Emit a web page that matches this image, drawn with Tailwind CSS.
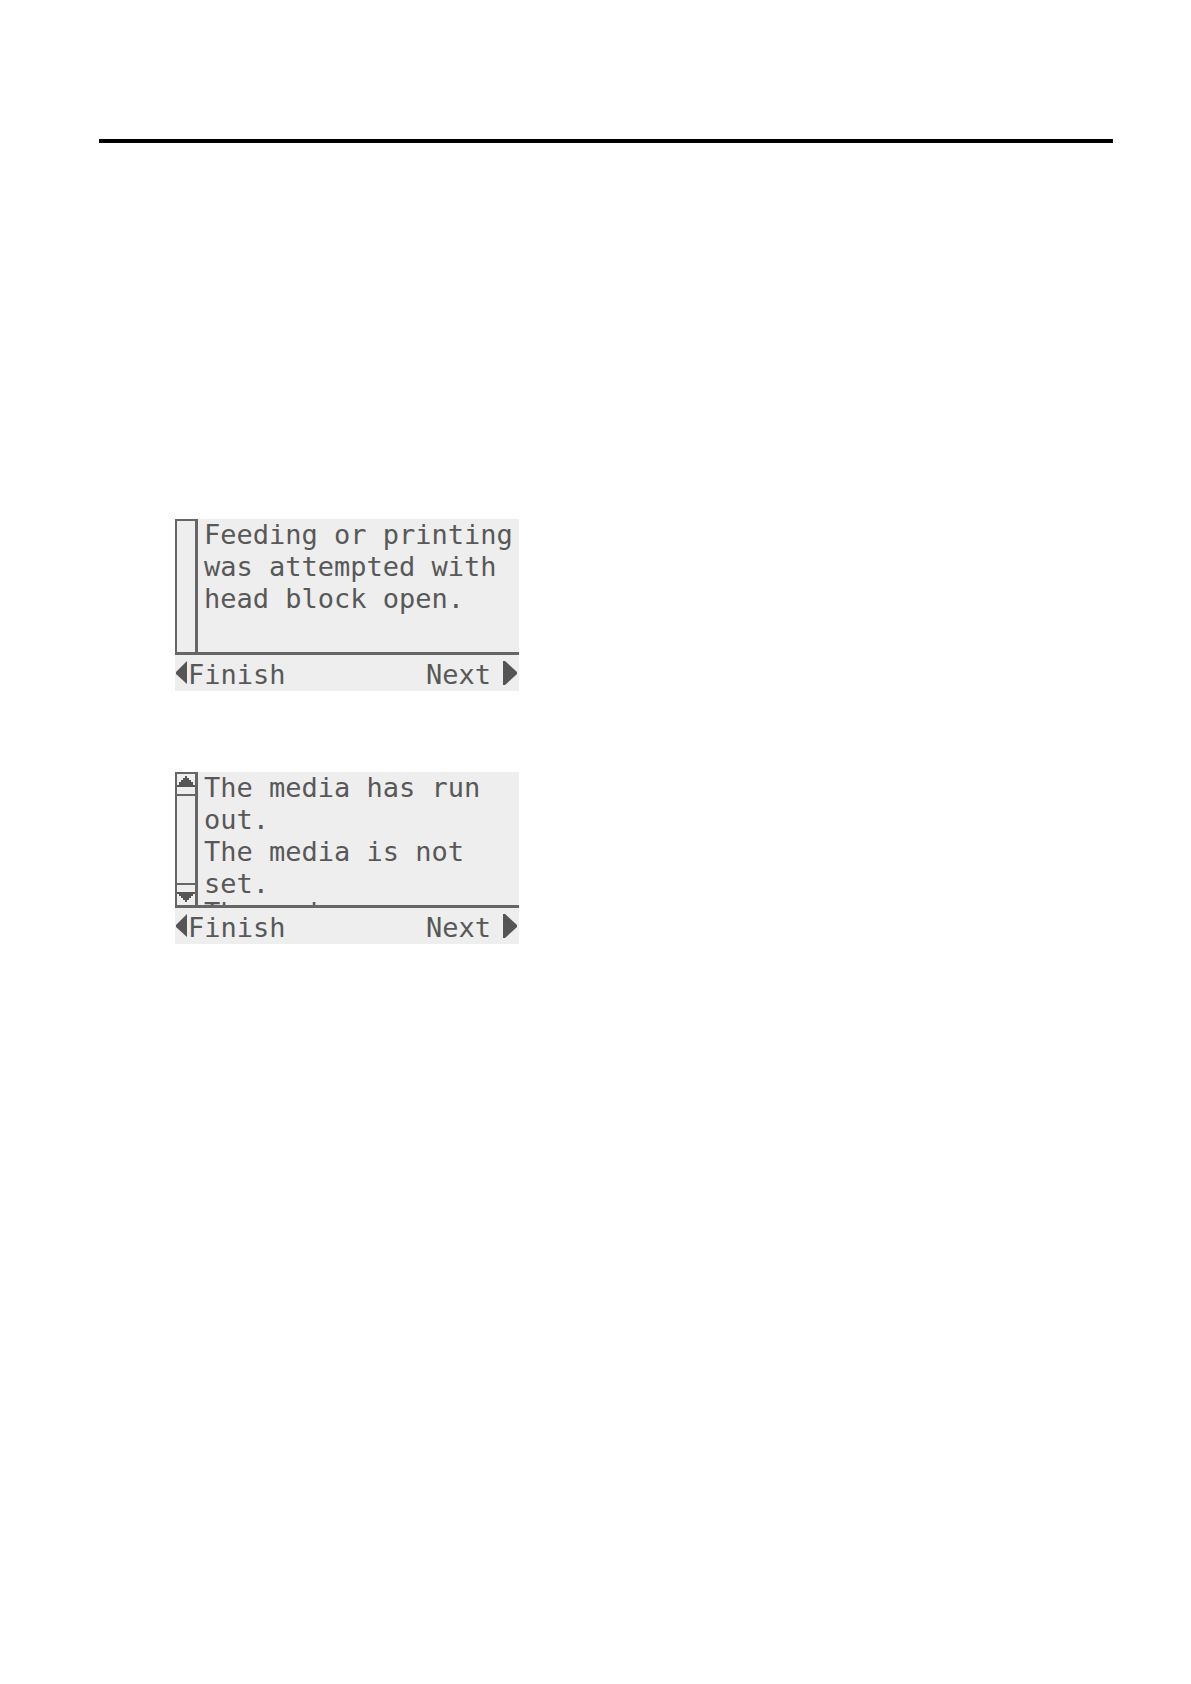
<!DOCTYPE html>
<html lang="en">

<head>
    <meta charset="UTF-8">
    <meta name="viewport" content="width=device-width, initial-scale=1.0">
    <title>Printer Messages</title>
    <script src="https://cdn.jsdelivr.net/npm/@tailwindcss/browser@4"></script>
</head>

<body class="bg-white pt-[139px] pl-[99px] pr-[78px]">
    <hr class="border-0 h-1 bg-black">

    <main class="flex flex-col items-start gap-[81px] pt-[376px] pl-[76px] font-['DejaVu_Sans_Mono',monospace] text-[27px] leading-8 text-[#585858]">
        <!-- Head block message -->
        <section class="w-full max-w-[344px] bg-[#eeeeee]">
            <div class="flex h-[136px] border-b-3 border-[#666666]">
                <div class="w-[23px] shrink-0 border-t-2 border-l-2 border-r-3 border-[#666666]"></div>
                <p class="pl-1.5 whitespace-nowrap">Feeding or printing<br>was attempted with<br>head block open.</p>
            </div>
            <div class="flex justify-between h-9 pt-1">
                <button type="button" class="flex items-start">
                    <svg class="w-[13px] h-6 mt-0.5" viewBox="0 0 13 24" fill="#555555" aria-hidden="true">
                        <path d="M1 11L12 0V23L1 13Z" />
                    </svg>
                    Finish
                </button>
                <button type="button" class="flex items-start gap-3 pr-0.5">
                    Next
                    <svg class="w-[14px] h-6 mt-0.5" viewBox="0 0 14 24" fill="#555555" aria-hidden="true">
                        <path d="M0 0H2L14 11V13L2 24H0Z" />
                    </svg>
                </button>
            </div>
        </section>

        <!-- Media message -->
        <section class="w-full max-w-[344px] bg-[#eeeeee]">
            <div class="flex h-[136px] border-b-3 border-[#666666]">
                <div class="flex flex-col justify-between w-[23px] shrink-0 border-t-2 border-l-2 border-r-3 border-[#666666]">
                    <button type="button" aria-label="Scroll up" class="flex items-end justify-center h-[22px] pb-1.5 border-b-2 border-[#666666]">
                        <svg class="w-[18px] h-[13px]" viewBox="0 0 18 13" fill="#555555" aria-hidden="true">
                            <path d="M8 1H10V3H12V5H14V7H16V10H2V7H4V5H6V3H8Z" />
                            <path d="M0 10H18V12H0Z" />
                        </svg>
                    </button>
                    <button type="button" aria-label="Scroll down" class="flex items-start justify-center h-[22px] pt-1.5 border-t-2 border-[#666666]">
                        <svg class="w-[18px] h-[13px]" viewBox="0 0 18 13" fill="#555555" aria-hidden="true">
                            <path d="M0 1H18V3H0Z" />
                            <path d="M2 3H16V5H14V7H12V9H10V11H8V9H6V7H4V5H2Z" />
                        </svg>
                    </button>
                </div>
                <!-- The last line scrolls out of view -->
                <div class="pl-1.5 overflow-hidden whitespace-nowrap">
                    <p>The media has run<br>out.<br>The media is not<br>set.</p>
                    <p class="leading-[26px]">The med</p>
                </div>
            </div>
            <div class="flex justify-between h-9 pt-1">
                <button type="button" class="flex items-start">
                    <svg class="w-[13px] h-6 mt-0.5" viewBox="0 0 13 24" fill="#555555" aria-hidden="true">
                        <path d="M1 11L12 0V23L1 13Z" />
                    </svg>
                    Finish
                </button>
                <button type="button" class="flex items-start gap-3 pr-0.5">
                    Next
                    <svg class="w-[14px] h-6 mt-0.5" viewBox="0 0 14 24" fill="#555555" aria-hidden="true">
                        <path d="M0 0H2L14 11V13L2 24H0Z" />
                    </svg>
                </button>
            </div>
        </section>
    </main>
</body>

</html>
